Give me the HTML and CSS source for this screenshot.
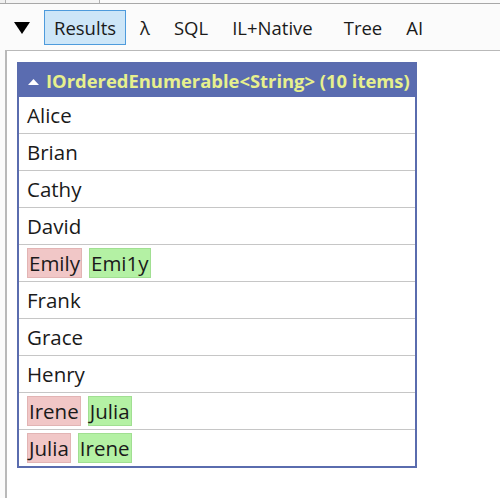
FILE: index.html
```html
<!DOCTYPE html>
<html>
<head>
<meta charset="utf-8">
<link rel="stylesheet" href="styles.css">
</head>
<body>
<div class="topstrip">
  <div class="seg seg-a"></div>
  <div class="seg seg-b"></div>
  <div class="seg seg-c"></div>
</div>
<div class="toolbar">
  <svg class="collapse" width="16" height="12" viewBox="0 0 16 12"><polygon points="0,0 16,0 8,12" fill="#000"/></svg>
  <span class="tab active">Results</span>
  <span class="tab">λ</span>
  <span class="tab">SQL</span>
  <span class="tab">IL+Native</span>
  <span class="tab tree">Tree</span>
  <span class="tab">AI</span>
</div>
<div class="pane">
  <table class="result">
    <thead>
      <tr><th><svg class="caret" width="11" height="6" viewBox="0 0 11 6"><polygon points="0,6 11,6 5.5,0" fill="#fff"/></svg>IOrderedEnumerable&lt;String&gt; (10 items)</th></tr>
    </thead>
    <tbody>
      <tr><td>Alice</td></tr>
      <tr><td>Brian</td></tr>
      <tr><td>Cathy</td></tr>
      <tr><td>David</td></tr>
      <tr><td><span class="del">Emily</span><span class="ins">Emi1y</span></td></tr>
      <tr><td>Frank</td></tr>
      <tr><td>Grace</td></tr>
      <tr><td>Henry</td></tr>
      <tr><td><span class="del">Irene</span><span class="ins">Julia</span></td></tr>
      <tr><td><span class="del">Julia</span><span class="ins">Irene</span></td></tr>
    </tbody>
  </table>
</div>
</body>
</html>
```
FILE: styles.css
```css
html, body {
  margin: 0;
  padding: 0;
  background: #fbfbfb;
  font-family: "Open Sans", "Noto Sans", sans-serif;
  color: #1a1a1a;
}
.topstrip {
  display: flex;
  height: 3px;
  border-bottom: 1px solid #a8a8a8;
  background: #f0f0f0;
}
.seg { height: 3px; }
.seg-a { width: 5px; }
.seg-b { width: 93px; border-left: 1px solid #b0b0b0; background: #f4f4f4; }
.seg-c { flex: 1; border-left: 1px solid #b0b0b0; background: #fafafa; }
.toolbar {
  display: flex;
  align-items: center;
  height: 46px;
  padding-left: 14px;
  background: #fbfbfb;
}
.collapse { margin-right: 14px; margin-top: 2px; }
.tab {
  font-size: 18.5px;
  padding: 5px 9px 5px;
  margin-right: 4px;
  border: 1px solid transparent;
  line-height: 23px;
}
.tab.active {
  background: #cde6f8;
  border-color: #4e9bdc;
}
.tab.tree { margin-left: 7px; }
.pane {
  margin-left: 5px;
  border-left: 2px solid #b9b9b9;
  border-top: 1px solid #b9b9b9;
  background: #ffffff;
  padding: 11px 0 0 10px;
  height: 448px;
  box-sizing: border-box;
}
.result {
  border-collapse: collapse;
  width: 400px;
  border: 2px solid #5a6cae;
}
.result th {
  background: #5a6cb0;
  color: #e7f08d;
  text-align: left;
  font-weight: bold;
  font-size: 18.4px;
  height: 33px;
  padding: 0 0 0 9px;
  white-space: nowrap;
}
.caret {
  margin-right: 7px;
  vertical-align: 3px;
}
.result td {
  height: 36px;
  padding: 0 0 0 8px;
  font-size: 20.5px;
  border-top: 1px solid #c6c6c6;
}
.result tbody tr:first-child td { border-top: none; }
.del, .ins {
  display: inline-block;
  padding: 0 1px;
  line-height: 28px;
  border: 1px solid transparent;
}
.del {
  background: #f1c7c7;
  border-color: #e2b4b4;
  margin-right: 7px;
}
.ins {
  background: #b4f1a4;
  border-color: #a1df92;
}
```
